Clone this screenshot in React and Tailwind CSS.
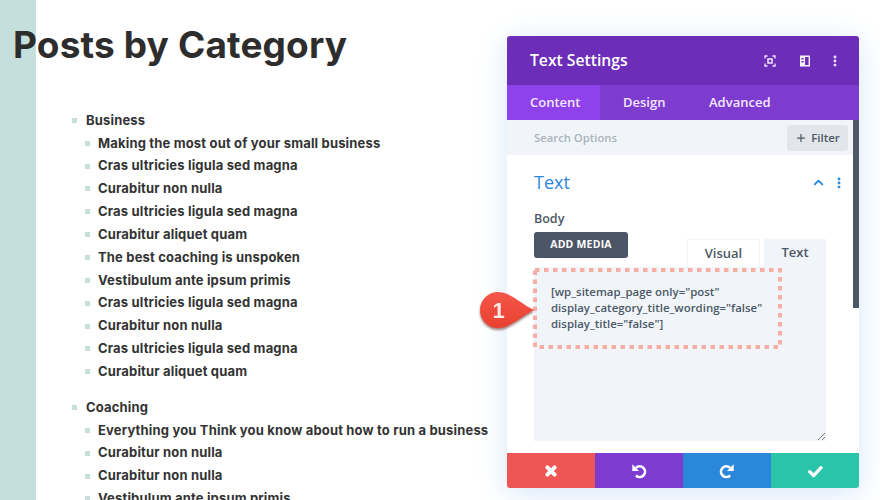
import React from "react";
import { ChevronUp, Plus, EllipsisVertical } from "lucide-react";

const business = [
  "Making the most out of your small business",
  "Cras ultricies ligula sed magna",
  "Curabitur non nulla",
  "Cras ultricies ligula sed magna",
  "Curabitur aliquet quam",
  "The best coaching is unspoken",
  "Vestibulum ante ipsum primis",
  "Cras ultricies ligula sed magna",
  "Curabitur non nulla",
  "Cras ultricies ligula sed magna",
  "Curabitur aliquet quam",
];

const coaching = [
  "Everything you Think you know about how to run a business",
  "Curabitur non nulla",
  "Curabitur non nulla",
  "Vestibulum ante ipsum primis",
];

const Item = ({ text, sub }) => (
  <li className={`flex items-center h-[22.85px] ${sub ? "pl-[13px]" : ""}`}>
    <span className={`w-[5px] h-[5px] bg-[#c5dfdc] shrink-0 ${sub ? "mr-[8px]" : "mr-[9px]"}`}></span>
    <span className="whitespace-nowrap">{text}</span>
  </li>
);

const Category = ({ title, posts }) => (
  <ul className="mb-[13px]">
    <Item text={title} />
    {posts.map((p, i) => (
      <Item key={i} text={p} sub />
    ))}
  </ul>
);

const FocusIcon = () => (
  <svg width="12" height="12" viewBox="0 0 12 12" fill="none" stroke="#f3e8ff" strokeWidth="1.3">
    <path d="M3.5 1H1v2.5M8.5 1H11v2.5M3.5 11H1V8.5M8.5 11H11V8.5" />
    <rect x="4" y="4" width="4" height="4" strokeWidth="1.5" />
  </svg>
);

const SidebarIcon = () => (
  <svg width="12" height="12" viewBox="0 0 12 12">
    <path
      fillRule="evenodd"
      d="M1.5 .5h9a.5.5 0 0 1 .5.5v10a.5.5 0 0 1-.5.5h-9a.5.5 0 0 1-.5-.5V1a.5.5 0 0 1 .5-.5zM6 2v8h3.6V2zM2.4 3v1.6h2.2V3zM2.4 6v1.6h2.2V6z"
      fill="#f8f2ff"
    />
  </svg>
);

const CloseIcon = () => (
  <svg width="16" height="16" viewBox="0 0 24 24" fill="none" stroke="#fff" strokeWidth="6" strokeLinecap="round">
    <path d="M6.5 6.5L17.5 17.5M17.5 6.5L6.5 17.5" />
  </svg>
);

const UndoIcon = ({ flip }) => (
  <svg className={flip ? "-scale-x-100" : ""} width="16" height="16" viewBox="0 0 24 24" fill="none">
    <path d="M7.34 7.34A8 8 0 1 1 7.34 18.66" stroke="#fff" strokeWidth="4" />
    <path d="M2 2V12H12Z" fill="#fff" />
  </svg>
);

const CheckIcon = () => (
  <svg width="16" height="16" viewBox="0 0 24 24" fill="none" stroke="#fff" strokeWidth="5" strokeLinecap="round" strokeLinejoin="round">
    <path d="M4 13L10 19L21 7" />
  </svg>
);

const App = () => {
  return (
    <div className="relative w-[880px] h-[500px] overflow-hidden bg-white font-['Inter',sans-serif]">
      {/* page behind the modal */}
      <div className="absolute left-0 top-0 w-[36px] h-full bg-[#c5dfdc]"></div>
      <div className="relative pl-[13px] pt-[24px]">
        <h1 className="text-[37px] leading-[42px] font-bold text-[#2d2d2d] tracking-[0.15px]">Posts by Category</h1>
        <div className="pl-[59px] pt-[43px] text-[13px] font-bold text-[#333333] tracking-[0.17px]">
          <Category title="Business" posts={business} />
          <Category title="Coaching" posts={coaching} />
        </div>
      </div>

      {/* settings modal */}
      <div className="absolute left-[507px] top-[36px] w-[352px] h-[452px] flex flex-col rounded-[3px] overflow-hidden bg-white shadow-[0_5px_30px_rgba(43,135,218,0.2)] font-['Open_Sans',sans-serif]">
        <div className="h-[49px] shrink-0 bg-[#6c2eb9] flex items-center pl-[23px] pr-[17px] text-white">
          <span className="text-[15.7px] font-semibold flex-1 pt-[1px]">Text Settings</span>
          <div className="flex items-center">
            <FocusIcon />
            <span className="ml-[23px] mr-[17px]"><SidebarIcon /></span>
            <EllipsisVertical size={14} strokeWidth={3} color="#f3e8ff" />
          </div>
        </div>
        <div className="h-[35px] shrink-0 bg-[#7e3bd0] flex text-[13px] font-semibold text-[#f3e8ff]">
          <div className="w-[93px] bg-[#8f42ec] pl-[23px] flex items-center">Content</div>
          <div className="w-[86px] pl-[23px] flex items-center">Design</div>
          <div className="pl-[23px] flex items-center">Advanced</div>
        </div>
        <div className="relative flex-1 min-h-0 flex flex-col">
          <div className="h-[35px] shrink-0 bg-[#f1f5f9] flex items-center justify-between pl-[27px] pr-[11px]">
            <span className="text-[11.3px] font-semibold text-[#a9b3bd] pt-[1px]">Search Options</span>
            <div className="w-[61px] h-[26px] bg-[#e2e6ea] rounded-[3px] flex items-center justify-center gap-[4px] text-[11.5px] font-semibold text-[#4c5866]">
              <Plus size={12} strokeWidth={2.5} />
              Filter
            </div>
          </div>
          <div className="flex-1 min-h-0 pl-[27px] pr-[33px]">
            <div className="flex items-center justify-between h-[27px] mt-[14px]">
              <span className="text-[18px] text-[#2b87da]">Text</span>
              <div className="flex items-center gap-[6px] -mr-[20px] text-[#2b87da]">
                <ChevronUp size={15} strokeWidth={3} />
                <EllipsisVertical size={14} strokeWidth={3} />
              </div>
            </div>
            <div className="mt-[14px] text-[12.5px] font-semibold text-[#4c5866] leading-[18px]">Body</div>
            <div className="flex items-start justify-between mt-[4px] h-[35px]">
              <div className="w-[94px] h-[26px] bg-[#4c5566] rounded-[3px] text-white text-[10.5px] font-bold flex items-center justify-center tracking-[0.2px]">
                ADD MEDIA
              </div>
              <div className="flex gap-[4px] text-[13px] font-semibold text-[#4c5866] mt-[7px]">
                <div className="w-[73px] h-[28px] bg-white border border-b-0 border-[#f1f5f9] flex items-center justify-center">Visual</div>
                <div className="w-[62px] h-[28px] bg-[#f1f5f9] flex items-center justify-center">Text</div>
              </div>
            </div>
            <div className="relative h-[174px] bg-[#f1f5f9] pt-[1px]">
              <div className="relative w-[249px] h-[81px] -ml-[1px] pt-[16px] pl-[18px] text-[11.45px] leading-[16px] font-semibold text-[#4c5866]">
                <svg className="absolute left-0 top-0" width="249" height="81" fill="none">
                  <rect x="2" y="2" width="245" height="77" stroke="#f7aea5" strokeWidth="4" strokeDasharray="4.5 4.5" />
                </svg>
                <p className="relative whitespace-nowrap">[wp_sitemap_page only="post"</p>
                <p className="relative whitespace-nowrap">display_category_title_wording="false"</p>
                <p className="relative whitespace-nowrap">display_title="false"]</p>
              </div>
              <svg className="absolute right-[1px] bottom-[1px]" width="8" height="8" viewBox="0 0 8 8" stroke="#777" strokeWidth="1">
                <path d="M1 8L8 1M5 8L8 5" />
              </svg>
            </div>
          </div>
          <div className="absolute right-0 top-0 w-[6px] h-[188px] bg-[#4c5866]"></div>
          <div className="h-[35px] shrink-0 flex text-white">
            <div className="flex-1 bg-[#ef5555] flex items-center justify-center"><CloseIcon /></div>
            <div className="flex-1 bg-[#7e3bd0] flex items-center justify-center"><UndoIcon /></div>
            <div className="flex-1 bg-[#2b87da] flex items-center justify-center"><UndoIcon flip /></div>
            <div className="flex-1 bg-[#29c4a9] flex items-center justify-center"><CheckIcon /></div>
          </div>
        </div>
      </div>

      {/* numbered callout */}
      <div className="absolute left-[480px] top-[292px] w-[55px] h-[37px] drop-shadow-[0_2px_1px_rgba(90,30,20,0.55)]">
        <svg className="absolute inset-0" width="55" height="37" viewBox="0 0 55 37">
          <defs>
            <linearGradient id="pin" x1="0" y1="0" x2="0" y2="1">
              <stop offset="0" stopColor="#f4574a" />
              <stop offset="1" stopColor="#e9402f" />
            </linearGradient>
          </defs>
          <path d="M18 0C30 0 40 11 54 18C40 25 30 36 18 36A18 18 0 0 1 18 0Z" fill="url(#pin)" />
        </svg>
        <span className="absolute left-0 top-0 w-[37px] h-[36px] flex items-center justify-center text-[#fdecea] font-bold text-[22px] font-['Liberation_Sans',sans-serif]">1</span>
      </div>
    </div>
  );
};

export default App;
